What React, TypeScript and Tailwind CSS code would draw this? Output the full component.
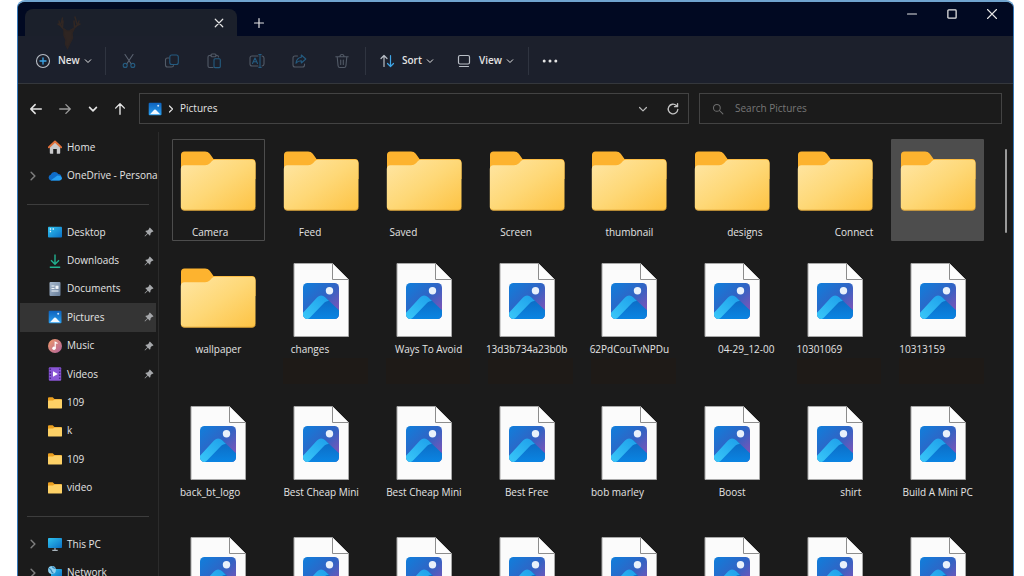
import type { ReactNode } from "react";

type IconProps = { className?: string };

/* ---------- shared gradients ---------- */

function Gradients() {
  return (
    <svg className="absolute h-0 w-0" aria-hidden="true">
      <defs>
        <linearGradient id="folderFront" x1="0" y1="0" x2="1" y2="1">
          <stop offset="0" stopColor="#ffe6a4" />
          <stop offset="0.5" stopColor="#fed877" />
          <stop offset="1" stopColor="#fdc344" />
        </linearGradient>
        <linearGradient id="tileSky" x1="0" y1="0" x2="1" y2="1">
          <stop offset="0" stopColor="#0f7fdc" />
          <stop offset="0.5" stopColor="#3163c4" />
          <stop offset="0.85" stopColor="#7a55b8" />
          <stop offset="1" stopColor="#7a55b8" />
        </linearGradient>
        <linearGradient id="tileBand" x1="0" y1="1" x2="1" y2="0">
          <stop offset="0" stopColor="#3ccbfa" />
          <stop offset="1" stopColor="#1d9eea" />
        </linearGradient>
        <linearGradient id="tileSlope" x1="0" y1="0" x2="0" y2="1">
          <stop offset="0" stopColor="#0d68c0" />
          <stop offset="1" stopColor="#0a86e4" />
        </linearGradient>
        <clipPath id="tileClip">
          <rect x="20" y="27" width="36" height="36" rx="4.5" />
        </clipPath>
        <linearGradient id="skyBlue" x1="0" y1="0" x2="1" y2="1">
          <stop offset="0" stopColor="#2fc3f0" />
          <stop offset="1" stopColor="#0b6fc4" />
        </linearGradient>
        <linearGradient id="picBlue" x1="0" y1="0" x2="0" y2="1">
          <stop offset="0" stopColor="#0e62bd" />
          <stop offset="1" stopColor="#2aa0f0" />
        </linearGradient>
        <linearGradient id="musicWarm" x1="0" y1="0" x2="1" y2="1">
          <stop offset="0" stopColor="#f09a68" />
          <stop offset="1" stopColor="#b0629c" />
        </linearGradient>
        <linearGradient id="docGrey" x1="0" y1="0" x2="1" y2="1">
          <stop offset="0" stopColor="#a9bbd0" />
          <stop offset="1" stopColor="#667c98" />
        </linearGradient>
      </defs>
    </svg>
  );
}

/* ---------- large file icons ---------- */

function FolderArt() {
  return (
    <svg viewBox="0 0 76 84" className="h-[84px] w-[76px] shrink-0" aria-hidden="true">
      <path d="M1 16 Q1 12.500 4.500 12.500 H25 Q28 12.500 29.800 14.800 L33.500 20 H72 Q75.500 20 75.500 24 V40 H1 Z" fill="#fdb32f" />
      <path d="M0.800 30 Q0.800 26.200 4.500 26.200 H25 Q28 26.200 30 24.200 L32 22 Q33.200 20.700 35.500 20.700 H72 Q75.500 20.700 75.500 24.500 V67.800 Q75.500 71.500 72 71.500 H4.500 Q0.800 71.500 0.800 67.800 Z" fill="url(#folderFront)" />
      <path d="M1.200 69 Q2 71.200 4.500 71.200 H72 Q74.500 71.200 75.200 69" fill="none" stroke="#d99a2c" strokeWidth="0.800" />
    </svg>
  );
}

function ImageFileArt() {
  return (
    <svg viewBox="0 0 76 84" className="h-[84px] w-[76px] shrink-0" aria-hidden="true">
      <path d="M11 7.500 H49.500 L65.500 23.500 V80.500 H11 Z" fill="#fbfbfb" stroke="#a8a8a8" strokeWidth="1" />
      <path d="M49.500 7.500 V23.500 H65.500" fill="#fdfdfd" stroke="#8c8c8c" strokeWidth="1" />
      <g clipPath="url(#tileClip)">
        <rect x="20" y="27" width="36" height="36" fill="url(#tileSky)" />
        <path d="M36 42 Q38.500 39.500 42.500 41.500 L58 56 V64 H24 Z" fill="url(#tileSlope)" />
        <path d="M17 60 L34 41.500 Q38 37.500 42.500 41.500 L46 45 Q43.500 44.500 41.500 46.500 L27.500 61 Q24.500 64 20 64 L17 64 Z" fill="url(#tileBand)" />
      </g>
      <circle cx="46.500" cy="34.700" r="3.700" fill="#e9f1fb" />
    </svg>
  );
}

/* ---------- sidebar icons ---------- */

function Small({ children }: { children: ReactNode }) {
  return (
    <svg viewBox="0 0 14 14" className="h-3.5 w-3.5 shrink-0" aria-hidden="true">
      {children}
    </svg>
  );
}

const HomeArt = () => (
  <Small>
    <path d="M1.800 6.500 L7 2 L12.200 6.500 V13 Q12.200 13.700 11.500 13.700 H8.800 V9 H5.200 V13.700 H2.500 Q1.800 13.700 1.800 13 Z" fill="#c9c9cb" />
    <path d="M0.900 7.300 L7 1.500 L13.100 7.300" fill="none" stroke="#e0703a" strokeWidth="1.900" strokeLinecap="round" strokeLinejoin="round" />
  </Small>
);
const CloudArt = () => (
  <Small>
    <path d="M3 11.500 A3 3 0 0 1 2.700 5.700 A4.200 4.200 0 0 1 10.300 5 A3.300 3.300 0 0 1 11 11.500 Z" fill="#0f6cc8" />
    <path d="M2.500 11.500 L9.500 6.500 Q13.800 6.800 13.900 9.300 Q13.700 11.500 11.500 11.500 Z" fill="#27a0f2" />
  </Small>
);
const DesktopArt = () => (
  <Small>
    <rect x="0" y="1.800" width="14" height="10.600" rx="0.900" fill="url(#skyBlue)" />
    <path d="M1.800 4h1.300M1.800 6.500h1.300M4.600 4h1.300" stroke="#e8f8ff" strokeWidth="1.300" />
  </Small>
);
const DownloadArt = () => (
  <Small>
    <path d="M7 0.500V10M3 6.300 7 10.200 11 6.300M1.800 13.200H12.200" fill="none" stroke="#21b08f" strokeWidth="1.400" />
  </Small>
);
const DocumentArt = () => (
  <Small>
    <rect x="1.500" y="0" width="11" height="14" rx="1" fill="url(#docGrey)" />
    <path d="M3.500 4h3M3.500 6.500h3M3.500 9h7" stroke="#f1f6fb" strokeWidth="1" />
    <rect x="7.500" y="3.700" width="3" height="3.200" fill="#f1f6fb" />
  </Small>
);
const PictureArt = () => (
  <Small>
    <rect x="0.700" y="0.700" width="12.800" height="12.600" rx="1" fill="url(#picBlue)" />
    <path d="M2 12.200 L6.200 7.800 Q7 7 7.800 7.800 L12.200 12.200 Z" fill="#f2f9ff" />
    <circle cx="10.200" cy="3.800" r="1" fill="#cfe6fa" />
  </Small>
);
const MusicArt = () => (
  <Small>
    <circle cx="7" cy="7" r="7" fill="url(#musicWarm)" />
    <circle cx="6" cy="9.300" r="1.700" fill="#fff" />
    <path d="M7.200 9.300V3.200L9.500 4.600" fill="none" stroke="#fff" strokeWidth="1.200" />
  </Small>
);
const VideoArt = () => (
  <Small>
    <rect x="0.800" y="0.300" width="12.400" height="13.400" rx="1" fill="#8a56d6" />
    <path d="M2.300 1.500V13M11.700 1.500V13" stroke="#4b2a8c" strokeWidth="1.500" strokeDasharray="1.600 1.400" />
    <path d="M5 4.300 9.800 7 5 9.700Z" fill="#fff" />
  </Small>
);
const FolderSmallArt = () => (
  <Small>
    <path d="M0 2.200Q0 1.200 1 1.200H4.700L6.500 3H13Q14 3 14 4V7H0Z" fill="#eb9f1f" />
    <path d="M0 5.200Q0 4.600 0.800 4.600H5L6.500 3.400H13.200Q14 3.400 14 4.200V11.700Q14 12.600 13.100 12.600H0.900Q0 12.600 0 11.700Z" fill="#fdd166" />
  </Small>
);
const ThisPcArt = () => (
  <Small>
    <rect x="0" y="1" width="14" height="10" rx="0.800" fill="url(#skyBlue)" />
    <path d="M7 11v2M4.300 13.300h5.400" stroke="#a9b4bd" strokeWidth="1.200" />
  </Small>
);
const NetworkArt = () => (
  <Small>
    <rect x="3" y="3" width="11" height="8.500" rx="0.800" fill="url(#skyBlue)" />
    <path d="M8.500 11.500v1.500M6 13.400h5" stroke="#a9b4bd" strokeWidth="1.100" />
    <circle cx="4" cy="4" r="3.900" fill="#8ed0f0" />
    <path d="M1 2.500Q3 3 3.500 5T5.500 7.300M4 0.500Q5 2 7.500 2.500" fill="none" stroke="#2c83b8" strokeWidth="1.100" />
  </Small>
);

function PinArt() {
  return (
    <svg viewBox="0 0 12 12" className="h-2.5 w-2.5 shrink-0" aria-hidden="true">
      <path d="M7 0.600 11.400 5 10.300 6 9.700 5.800 7.800 7.900Q8 9.500 7.100 10.500L4.600 8 1.200 11.300 0.700 10.800 4 7.400 1.500 4.900Q2.500 4 4.100 4.200L6.200 2.300 6 1.700Z" fill="#a6a8ab" />
    </svg>
  );
}

/* ---------- line icons ---------- */

function Line({ className = "h-4 w-4", width = 1.2, children }: IconProps & { width?: number; children: ReactNode }) {
  return (
    <svg viewBox="0 0 16 16" className={`shrink-0 ${className}`} fill="none" stroke="currentColor" strokeWidth={width} strokeLinecap="round" strokeLinejoin="round" aria-hidden="true">
      {children}
    </svg>
  );
}

const ChevronDown = ({ className = "h-2 w-2", width = 2 }: IconProps & { width?: number }) => (
  <Line className={className} width={width}><path d="M2.500 5.500 8 11l5.500-5.500" /></Line>
);
const ChevronRight = ({ className = "h-2 w-2" }: IconProps) => (
  <Line className={className} width={2.4}><path d="M5 2l6 6-6 6" /></Line>
);

const CutArt = () => (
  <Line className="h-4 w-4" width={1.1}>
    <path d="M4 1.500 10.300 11M12 1.500 5.700 11" stroke="#5b6371" />
    <circle cx="4.200" cy="12.400" r="2" stroke="#245b80" />
    <circle cx="11.800" cy="12.400" r="2" stroke="#245b80" />
  </Line>
);
const CopyArt = () => (
  <Line className="h-4 w-4" width={1.1}>
    <path d="M5 5H3.500Q1.500 5 1.500 7v5q0 2 2 2h4q2 0 2-1.500" stroke="#525a67" />
    <rect x="5.800" y="2" width="8.500" height="9.500" rx="2" stroke="#245b80" />
  </Line>
);
const PasteArt = () => (
  <Line className="h-4 w-4" width={1.1}>
    <path d="M5 2.500H3.500Q2 2.500 2 4v9q0 1.500 1.500 1.500H7M10 2.500h1q1.500 0 1.500 1.500" stroke="#525a67" />
    <rect x="5" y="1" width="5" height="2.800" rx="1" stroke="#525a67" />
    <rect x="8" y="5.800" width="6.300" height="8.800" rx="1" stroke="#245b80" />
  </Line>
);
const RenameArt = () => (
  <Line className="h-4 w-4" width={1.1}>
    <path d="M9 3H3Q1 3 1 5v6q0 2 2 2h6M13 3q2 .3 2 2v6q0 1.700-2 2" stroke="#525a67" />
    <path d="M3.500 10.500 6 5l2.500 5.500M4.400 8.800h3.200M11 1.500v13M9.800 1.500h2.400M9.800 14.500h2.400" stroke="#245b80" />
  </Line>
);
const ShareArt = () => (
  <Line className="h-4 w-4" width={1.1}>
    <path d="M6.500 3H4Q2 3 2 5v7q0 2 2 2h7.500q2 0 2-2v-1" stroke="#525a67" />
    <path d="M10.300 2 14.800 6l-4.500 4V7.800Q7 7.700 5 10.200 5.500 5 10.300 4.300Z" stroke="#245b80" />
  </Line>
);
const DeleteArt = () => (
  <Line className="h-4 w-4" width={1.1}>
    <path d="M1.800 3.800h12.400M6 3.500Q6 1.500 8 1.500t2 2M3.200 4l.9 9q.2 1.500 1.700 1.500h4.400q1.500 0 1.700-1.500l.9-9M6.700 7v4.500M9.300 7v4.500" stroke="#525a67" />
  </Line>
);

function StagArt() {
  return (
    <svg viewBox="0 0 24 38" className="h-[38px] w-6 opacity-70" fill="none" stroke="#3b2a20" strokeWidth="1.500" strokeLinecap="round" aria-hidden="true">
      <path d="M8 17Q3 14 2 8M4.500 13 1 11M5.500 14.500 6 8M4 11 5.500 5M14 17Q21 14 22 8M19 13l4-2M17.500 14.500 17 8M20 11 18 4" />
      <path d="M7 16 10 18h3l4-2-2 4 .5 5-3 6-2 4-2-4 .5-4-2-5Z" fill="#38281f" stroke="#35261f" />
    </svg>
  );
}

/* ---------- data ---------- */

type Place = { name: string; art: ReactNode; expandable?: boolean; pinned?: boolean; current?: boolean };

const topPlaces: Place[] = [
  { name: "Home", art: <HomeArt /> },
  { name: "OneDrive - Persona", art: <CloudArt />, expandable: true },
];
const quickPlaces: Place[] = [
  { name: "Desktop", art: <DesktopArt />, pinned: true },
  { name: "Downloads", art: <DownloadArt />, pinned: true },
  { name: "Documents", art: <DocumentArt />, pinned: true },
  { name: "Pictures", art: <PictureArt />, pinned: true, current: true },
  { name: "Music", art: <MusicArt />, pinned: true },
  { name: "Videos", art: <VideoArt />, pinned: true },
  { name: "109", art: <FolderSmallArt /> },
  { name: "k", art: <FolderSmallArt /> },
  { name: "109", art: <FolderSmallArt /> },
  { name: "video", art: <FolderSmallArt /> },
];
const devicePlaces: Place[] = [
  { name: "This PC", art: <ThisPcArt />, expandable: true },
  { name: "Network", art: <NetworkArt />, expandable: true },
];

type Entry = { name: string; folder?: boolean; align?: string; state?: "focused" | "selected"; shaded?: boolean };

const entries: Entry[] = [
  { name: "Camera", folder: true, align: "justify-start pl-5", state: "focused" },
  { name: "Feed", folder: true, align: "justify-start pl-6" },
  { name: "Saved", folder: true, align: "justify-start pl-3" },
  { name: "Screen", folder: true, align: "justify-start pl-5" },
  { name: "thumbnail", folder: true },
  { name: "designs", folder: true, align: "justify-end pr-4" },
  { name: "Connect", folder: true, align: "justify-end pr-2" },
  { name: "", folder: true, state: "selected" },
  { name: "wallpaper", folder: true },
  { name: "changes", align: "justify-start pl-4", shaded: true },
  { name: "Ways To Avoid", align: "justify-end pr-2", shaded: true },
  { name: "13d3b734a23b0b", shaded: true },
  { name: "62PdCouTvNPDu", shaded: true },
  { name: "04-29_12-00", align: "justify-end pr-1" },
  { name: "10301069", align: "justify-start pl-2", shaded: true },
  { name: "10313159", align: "justify-start pl-2", shaded: true },
  { name: "back_bt_logo", align: "justify-start pl-2" },
  { name: "Best Cheap Mini" },
  { name: "Best Cheap Mini" },
  { name: "Best Free" },
  { name: "bob marley", align: "justify-start pl-2" },
  { name: "Boost" },
  { name: "shirt", align: "justify-end pr-5" },
  { name: "Build A Mini PC" },
  ...Array.from({ length: 8 }, () => ({ name: "" })),
];

/* ---------- parts ---------- */

function PlaceRow({ place }: { place: Place }) {
  return (
    <li className="flex">
      <a
        href="#"
        aria-current={place.current ? "page" : undefined}
        className={`flex min-w-0 flex-1 items-center ${place.current ? "bg-[#343434]" : ""}`}
      >
        <span className="flex w-7 shrink-0 items-center pl-2 text-[#7d7d7d]">
          {place.expandable && <ChevronRight className="h-2.5 w-2.5" />}
        </span>
        {place.art}
        <span className="ml-[5px] flex-1 whitespace-nowrap">{place.name}</span>
        {place.pinned && <span className="pr-[2px]"><PinArt /></span>}
      </a>
    </li>
  );
}

function Divider() {
  return (
    <div className="flex h-7 items-center px-[7px]">
      <hr className="flex-1 border-t border-[#3d3d3d]" />
    </div>
  );
}

function EntryCell({ entry }: { entry: Entry }) {
  const state =
    entry.state === "focused"
      ? "ring-1 ring-inset ring-[#4d4d4d]"
      : entry.state === "selected"
        ? "bg-[#4d4d4d]"
        : "";
  return (
    <li className="flex min-w-0 flex-col">
      <button
        type="button"
        aria-label={entry.name || (entry.folder ? "Folder" : "Image")}
        className={`flex h-[102px] shrink-0 flex-col items-center rounded-[1px] ${state}`}
      >
        {entry.folder ? <FolderArt /> : <ImageFileArt />}
        <span className={`flex w-full whitespace-nowrap leading-[18px] ${entry.align ?? "justify-center"}`}>{entry.name}</span>
      </button>
      {entry.shaded && <div className="ml-2 flex-1 bg-[#1e1a17]" />}
    </li>
  );
}

function Separator() {
  return <div className="h-7 w-px bg-[#2f3440]" />;
}

/* ---------- page ---------- */

export default function App() {
  return (
    <div className="h-screen overflow-hidden bg-white pr-[10px] pl-[17px] font-['Open_Sans','Noto_Sans',sans-serif] text-[10px] text-[#e4e4e4]">
      <Gradients />
      <div className="flex h-full flex-col overflow-hidden rounded-t-lg border-x border-t-2 border-x-[#3678b8] border-t-[#6fa3cf] bg-[#1b1b1b]">
        <header className="flex h-[34px] shrink-0 justify-between bg-[#010922] pl-[7px]">
          <div className="flex items-end">
            <div className="relative flex h-[27px] w-[212px] items-center justify-end rounded-t-lg bg-[#1b202b] pr-[10px]">
              <div className="absolute top-1 left-8"><StagArt /></div>
              <button type="button" aria-label="Close tab" className="flex h-4 w-4 items-center justify-center">
                <Line className="h-3 w-3" width={1.6}><path d="M3 3l10 10M13 3 3 13" /></Line>
              </button>
            </div>
            <button type="button" aria-label="New tab" className="ml-[14px] flex h-[27px] w-4 items-center justify-center">
              <Line className="h-3 w-3" width={1.6}><path d="M8 2v12M2 8h12" /></Line>
            </button>
          </div>
          <div className="flex h-6 items-center gap-6 pr-[13px]">
            <button type="button" aria-label="Minimize" className="flex w-4 justify-center"><Line className="h-3 w-3" width={1.5}><path d="M2 8h12" /></Line></button>
            <button type="button" aria-label="Maximize" className="flex w-4 justify-center"><Line className="h-3 w-3" width={1.7}><rect x="2.500" y="2.500" width="11" height="11" rx="1" /></Line></button>
            <button type="button" aria-label="Close" className="flex w-4 justify-center"><Line className="h-3 w-3" width={1.5}><path d="M2 2l12 12M14 2 2 14" /></Line></button>
          </div>
        </header>

        <div role="toolbar" aria-label="Commands" className="flex h-12 shrink-0 items-center border-b border-[#34373c] bg-[#1c202c] pt-[2px] pl-[17px] font-semibold">
          <button type="button" className="flex w-[70px] items-center">
            <Line className="h-4 w-4" width={1.1}>
              <circle cx="8" cy="8" r="6.500" stroke="#b9bec6" />
              <path d="M8 5v6M5 8h6" stroke="#3ea6e8" strokeWidth="1.300" />
            </Line>
            <span className="ml-[7px] mr-1">New</span>
            <ChevronDown />
          </button>
          <Separator />
          <div className="flex w-[259px] items-center justify-between px-[15px]">
            <button type="button" aria-label="Cut"><CutArt /></button>
            <button type="button" aria-label="Copy"><CopyArt /></button>
            <button type="button" aria-label="Paste"><PasteArt /></button>
            <button type="button" aria-label="Rename"><RenameArt /></button>
            <button type="button" aria-label="Share"><ShareArt /></button>
            <button type="button" aria-label="Delete"><DeleteArt /></button>
          </div>
          <Separator />
          <div className="flex w-[162px] items-center justify-between pr-[14px] pl-[13px]">
            <button type="button" className="flex items-center">
              <Line className="h-4 w-4" width={1.2}>
                <path d="M5 13.500V2.500M2 5.500l3-3 3 3" stroke="#b9bec6" />
                <path d="M11.500 2.500v11M8.500 10.500l3 3 3-3" stroke="#3ea6e8" />
              </Line>
              <span className="ml-[7px] mr-1">Sort</span>
              <ChevronDown />
            </button>
            <button type="button" className="flex items-center">
              <Line className="h-4 w-4" width={1.2}>
                <rect x="2.500" y="2.500" width="11" height="8.500" rx="1.500" stroke="#b9bec6" />
                <path d="M3.500 13.500h9" stroke="#b9bec6" />
              </Line>
              <span className="ml-[7px] mr-1">View</span>
              <ChevronDown />
            </button>
          </div>
          <Separator />
          <button type="button" aria-label="More" className="ml-[13px]">
            <svg viewBox="0 0 16 16" className="h-4 w-4" fill="currentColor" aria-hidden="true">
              <circle cx="2.200" cy="8" r="1.500" /><circle cx="8" cy="8" r="1.500" /><circle cx="13.800" cy="8" r="1.500" />
            </svg>
          </button>
        </div>

        <div className="flex shrink-0 items-center gap-[10px] pt-[9px] pr-[11px] pb-2 pl-[11px]">
          <div className="flex w-[100px] items-center justify-between pr-[2px]">
            <button type="button" aria-label="Back"><Line className="h-3.5 w-3.5" width={1.8}><path d="M14 8H2M7 3 2 8l5 5" /></Line></button>
            <button type="button" aria-label="Forward" className="text-[#9a9a9a]"><Line className="h-3.5 w-3.5" width={1.6}><path d="M2 8h12M9 3l5 5-5 5" /></Line></button>
            <button type="button" aria-label="Recent locations"><ChevronDown className="h-2.5 w-2.5" width={2.6} /></button>
            <button type="button" aria-label="Up"><Line className="h-3.5 w-3.5" width={1.6}><path d="M8 14V2M3 7l5-5 5 5" /></Line></button>
          </div>
          <div className="flex h-[31px] flex-[532] items-center border border-[#434343] px-2">
            <PictureArt />
            <span className="mx-[5px]"><ChevronRight /></span>
            <span className="flex-1">Pictures</span>
            <button type="button" aria-label="Previous locations" className="mr-[18px] text-[#b5b5b5]"><ChevronDown className="h-2.5 w-2.5" /></button>
            <button type="button" aria-label="Refresh" className="text-[#c4c4c4]">
              <Line className="h-3.5 w-3.5" width={1.5}><path d="M13.500 8.500A5.500 5.500 0 1 1 11.800 4M13.200 1.800V5.300H9.700" /></Line>
            </button>
          </div>
          <label className="flex h-[31px] flex-[277] items-center border border-[#434343] px-3 text-[#6f6f6f]">
            <Line className="h-3 w-3" width={1.4}><circle cx="6.500" cy="6.500" r="4.500" /><path d="M10 10l4.500 4.500" /></Line>
            <input type="search" aria-label="Search Pictures" placeholder="Search Pictures" className="ml-[11px] min-w-0 flex-1 bg-transparent outline-none placeholder:text-[#777777]" />
          </label>
        </div>

        <div className="flex min-h-0 flex-1">
          <nav aria-label="Locations" className="w-[141px] shrink-0 overflow-hidden border-r border-[#2b2b2b] px-[2px] pt-[1px]">
            <ul className="grid h-[57px] auto-rows-fr">
              {topPlaces.map((p) => <PlaceRow key={p.name} place={p} />)}
            </ul>
            <Divider />
            <ul className="grid h-[284px] auto-rows-fr">
              {quickPlaces.map((p, i) => <PlaceRow key={i} place={p} />)}
            </ul>
            <Divider />
            <ul className="grid h-[57px] auto-rows-fr">
              {devicePlaces.map((p) => <PlaceRow key={p.name} place={p} />)}
            </ul>
          </nav>
          <main className="flex min-w-0 flex-1 justify-between overflow-hidden pt-[7px] pr-[6px] pl-[13px]">
            <ul className="grid min-w-0 flex-1 grid-cols-8 grid-rows-[102px_128px_116px_116px] gap-x-[10px] gap-y-[15px]">
              {entries.map((e, i) => <EntryCell key={i} entry={e} />)}
            </ul>
            <div className="mt-[10px] ml-[21px] h-[84px] w-0.5 shrink-0 rounded-full bg-[#9a9a9a]" />
          </main>
        </div>
      </div>
    </div>
  );
}
